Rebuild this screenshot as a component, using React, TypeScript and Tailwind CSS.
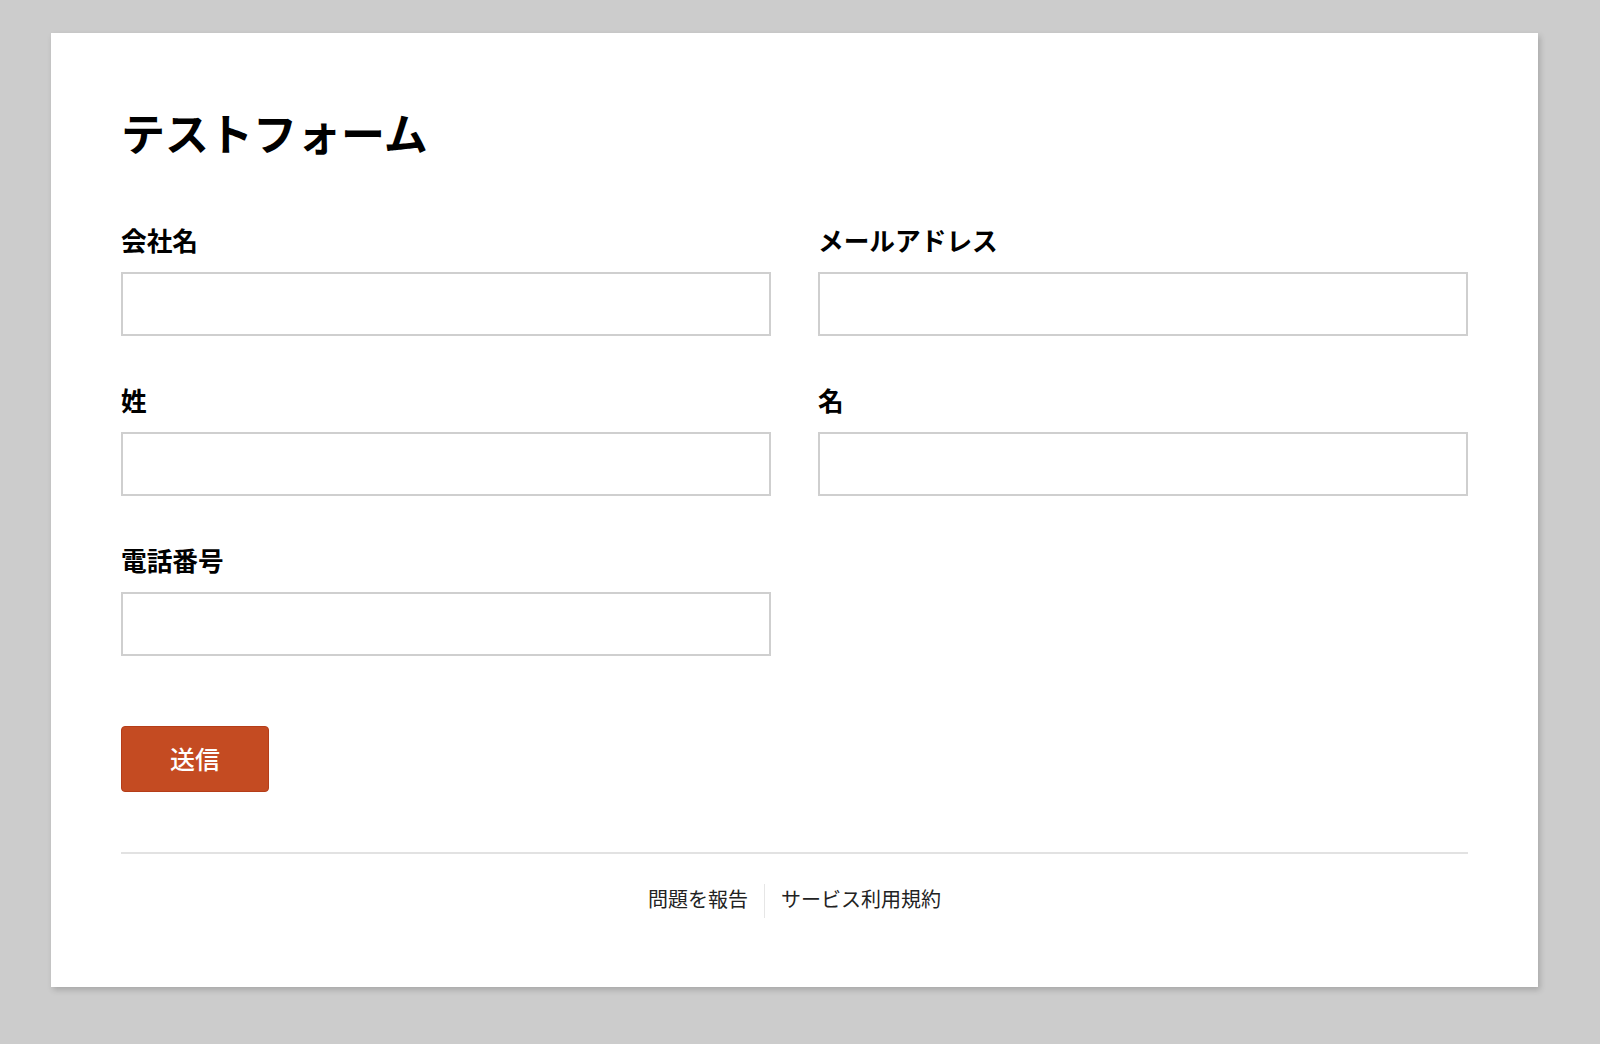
const fields = [
  { id: 'company', label: '会社名' },
  { id: 'email', label: 'メールアドレス' },
  { id: 'lastName', label: '姓' },
  { id: 'firstName', label: '名' },
  { id: 'phone', label: '電話番号' },
];

function Field({ id, label }: { id: string; label: string }) {
  return (
    <div className="flex flex-col">
      <label htmlFor={id} className="text-[25.7px] leading-[32px] font-bold text-black">
        {label}
      </label>
      <input
        id={id}
        type="text"
        className="mt-4 h-16 w-full border-2 border-[#cfcfcf] bg-white px-3 text-[22px] outline-none"
      />
    </div>
  );
}

export default function App() {
  return (
    <div
      className="min-h-[1044px] bg-[#cccccc] pt-[33px] pl-[51px]"
      style={{ fontFamily: '"Noto Sans CJK JP", "Noto Sans", sans-serif' }}
    >
      <div className="w-[1487px] h-[954px] bg-white px-[70px] pt-[73px] shadow-[2px_3px_6px_rgba(0,0,0,0.18)]">
        <h1 className="text-[44px] leading-[52px] font-bold text-black">テストフォーム</h1>

        <form className="mt-[66px]" onSubmit={(e) => e.preventDefault()}>
          <div className="grid grid-cols-2 gap-x-[47px] gap-y-12">
            {fields.map((f) => (
              <Field key={f.id} id={f.id} label={f.label} />
            ))}
          </div>

          <button
            type="submit"
            className="mt-[70px] h-[66px] w-[148px] rounded-[4px] border border-[#b53d19] bg-[#c44b22] text-[25px] font-medium text-white"
          >
            送信
          </button>
        </form>

        <div className="mt-[60px] border-t-2 border-[#e2e2e2]" />

        <div className="mt-[30px] flex justify-center text-[20px] text-[#222]">
          <a href="#" className="flex h-[34px] items-center pr-4 pb-[5px]">
            問題を報告
          </a>
          <a href="#" className="flex h-[34px] items-center border-l border-[#e6e6e6] pl-4 pb-[5px]">
            サービス利用規約
          </a>
        </div>
      </div>
    </div>
  );
}
